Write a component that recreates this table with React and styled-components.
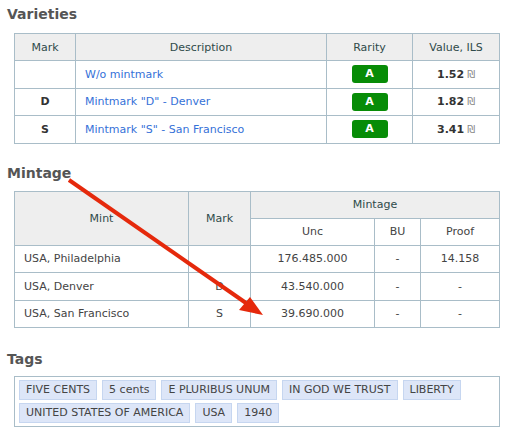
import React from "react"
import styled, { createGlobalStyle } from "styled-components"

const Global = createGlobalStyle`
  body {
    margin: 0;
    background: #fff;
    font-family: "DejaVu Sans", Verdana, sans-serif;
    font-size: 11px;
    color: #444;
  }
`

const Page = styled.div`
  position: relative;
  width: 524px;
  height: 438px;
  padding: 6px 7px 0;
  box-sizing: border-box;
`

const Heading = styled.h2`
  margin: ${(p) => p.$top || 0}px 0 ${(p) => p.$bottom ?? 10}px;
  font-size: 14px;
  font-weight: bold;
  color: #555;
  line-height: 16px;
`

const Table = styled.table`
  border-collapse: collapse;
  margin-left: 7px;
  width: 486px;
  table-layout: fixed;

  th,
  td {
    border: 1px solid #a9bdc8;
    padding: 0 9px;
  }

  th {
    height: 26px;
    background: #eeeeee;
    font-weight: normal;
    color: #2f4a4a;
    text-align: center;
  }

  td {
    height: 26.5px;
  }
`

const Col = styled.col`
  width: ${(p) => p.$w}px;
`

const SubHead = styled.th`
  && {
    height: 26px;
    background: #fff;
    color: #444;
  }
`

const Cell = styled.td`
  text-align: ${(p) => p.$align || "center"};
  font-weight: ${(p) => (p.$bold ? "bold" : "normal")};
  color: ${(p) => (p.$bold ? "#333" : "#444")};
`

const Link = styled.a`
  color: #3571d8;
  text-decoration: none;
`

const Badge = styled.span`
  display: inline-block;
  width: 36px;
  height: 18px;
  line-height: 18px;
  border-radius: 3px;
  background: #078c07;
  color: #fff;
  font-weight: bold;
  font-size: 11px;
  vertical-align: middle;
`

const Shekel = styled.span`
  font-weight: normal;
  color: #888;
  font-size: 10px;
  margin-left: 3px;
`

const TagBox = styled.div`
  margin-left: 7px;
  width: 486px;
  box-sizing: border-box;
  border: 1px solid #a9bdc8;
  padding: 3px 4px;
  display: flex;
  flex-wrap: wrap;
  align-items: flex-start;
  gap: 3px 5px;
`

const Tag = styled.span`
  display: block;
  height: 20px;
  line-height: 18px;
  box-sizing: border-box;
  padding: 0 6px;
  background: #dde6f8;
  border: 1px solid #c6d6f0;
  color: #444;
  font-size: 11px;
`

const Arrow = styled.svg`
  position: absolute;
  left: 0;
  top: 0;
  pointer-events: none;
`

const varieties = [
  { mark: "", desc: "W/o mintmark", value: "1.52" },
  { mark: "D", desc: 'Mintmark "D" - Denver', value: "1.82" },
  { mark: "S", desc: 'Mintmark "S" - San Francisco', value: "3.41" },
]

const mintage = [
  { mint: "USA, Philadelphia", mark: "", unc: "176.485.000", bu: "-", proof: "14.158" },
  { mint: "USA, Denver", mark: "D", unc: "43.540.000", bu: "-", proof: "-" },
  { mint: "USA, San Francisco", mark: "S", unc: "39.690.000", bu: "-", proof: "-" },
]

const tags = [
  "FIVE CENTS",
  "5 cents",
  "E PLURIBUS UNUM",
  "IN GOD WE TRUST",
  "LIBERTY",
  "UNITED STATES OF AMERICA",
  "USA",
  "1940",
]

export default function App() {
  return (
    <Page>
      <Global />
      <Heading $bottom={11}>Varieties</Heading>
      <Table>
        <colgroup>
          <Col $w={61} />
          <Col $w={251} />
          <Col $w={86} />
          <Col $w={87} />
        </colgroup>
        <thead>
          <tr>
            <th>Mark</th>
            <th>Description</th>
            <th>Rarity</th>
            <th>Value, ILS</th>
          </tr>
        </thead>
        <tbody>
          {varieties.map((v) => (
            <tr key={v.desc}>
              <Cell $bold>{v.mark}</Cell>
              <Cell $align="left">
                <Link href="#">{v.desc}</Link>
              </Cell>
              <Cell>
                <Badge>A</Badge>
              </Cell>
              <Cell $bold>
                {v.value}
                <Shekel>₪</Shekel>
              </Cell>
            </tr>
          ))}
        </tbody>
      </Table>

      <Heading $top={21}>Mintage</Heading>
      <Table>
        <colgroup>
          <Col $w={174} />
          <Col $w={62} />
          <Col $w={124} />
          <Col $w={46} />
          <Col $w={79} />
        </colgroup>
        <thead>
          <tr>
            <th rowSpan={2}>Mint</th>
            <th rowSpan={2}>Mark</th>
            <th colSpan={3}>Mintage</th>
          </tr>
          <tr>
            <SubHead>Unc</SubHead>
            <SubHead>BU</SubHead>
            <SubHead>Proof</SubHead>
          </tr>
        </thead>
        <tbody>
          {mintage.map((m) => (
            <tr key={m.mint}>
              <Cell $align="left">{m.mint}</Cell>
              <Cell>{m.mark}</Cell>
              <Cell>{m.unc}</Cell>
              <Cell>{m.bu}</Cell>
              <Cell>{m.proof}</Cell>
            </tr>
          ))}
        </tbody>
      </Table>

      <Heading $top={23} $bottom={9}>Tags</Heading>
      <TagBox>
        {tags.map((t) => (
          <Tag key={t}>{t}</Tag>
        ))}
      </TagBox>

      <Arrow width="524" height="438" viewBox="0 0 524 438">
        <line x1="69" y1="180" x2="246" y2="303" stroke="#e5290c" strokeWidth="4" />
        <polygon points="250,297 263,315 239,310" fill="#e5290c" />
      </Arrow>
    </Page>
  )
}
